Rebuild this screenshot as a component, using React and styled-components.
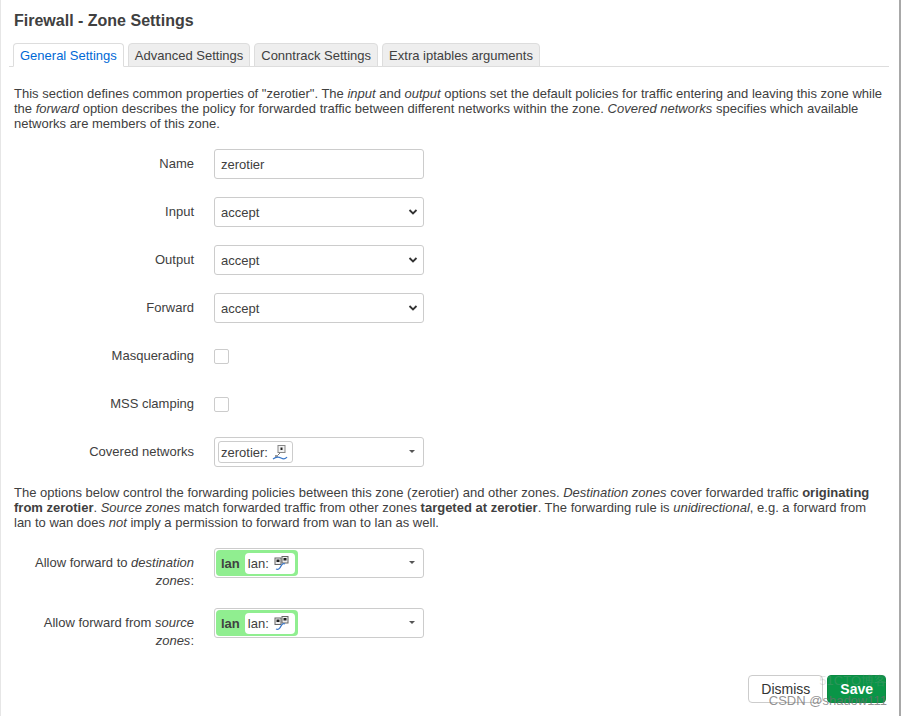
import React from 'react';
import styled, { createGlobalStyle } from 'styled-components';

const GlobalStyle = createGlobalStyle`
  html, body {
    margin: 0;
    padding: 0;
    background: #fff;
  }
  body {
    font-family: "Liberation Sans", Arial, sans-serif;
    font-size: 13px;
    color: #404040;
  }
`;

const Modal = styled.div`
  position: relative;
  box-sizing: border-box;
  width: 901px;
  height: 716px;
  padding: 11px 10px 0 8px;
  border-left: 1px solid #e6e6e6;
  border-right: 2px solid #a8a8a8;
  overflow: hidden;
`;

const Title = styled.h3`
  margin: 0 0 12px 5px;
  font-size: 16px;
  line-height: 20px;
  font-weight: bold;
  color: #404040;
`;

const TabList = styled.ul`
  display: flex;
  gap: 4px;
  margin: 0;
  padding: 0 0 0 4px;
  list-style: none;
  border-bottom: 1px solid #ddd;
`;

const Tab = styled.li`
  box-sizing: border-box;
  height: 24px;
  margin-bottom: -1px;
  padding: 0 6px;
  line-height: 23px;
  font-size: 13px;
  border: 1px solid #ddd;
  border-bottom-color: ${p => (p.active ? '#fff' : '#ddd')};
  border-radius: 4px 4px 0 0;
  background: ${p => (p.active ? '#fff' : '#eee')};
  color: ${p => (p.active ? '#0069d6' : '#404040')};
`;

const Description = styled.p`
  margin: ${p => p.margin || '0'};
  padding: 0 5px;
  font-size: 13px;
  line-height: 15px;
  color: #404040;
`;

const Form = styled.div`
  display: flex;
  flex-direction: column;
  gap: 18px;
  padding-left: 5px;
`;

const Row = styled.div`
  display: flex;
  align-items: flex-start;
  gap: 20px;
`;

const Label = styled.label`
  flex: 0 0 180px;
  padding-top: 6px;
  text-align: right;
  line-height: 18px;
  font-size: 13px;
  color: #404040;
`;

const Field = styled.div`
  position: relative;
  display: flex;
  align-items: center;
  min-height: 30px;
`;

const TextInput = styled.input`
  box-sizing: border-box;
  width: 210px;
  height: 30px;
  padding: 0 6px;
  font: inherit;
  font-size: 13px;
  color: #404040;
  border: 1px solid #ccc;
  border-radius: 3px;
  outline: none;
`;

const Select = styled.select`
  box-sizing: border-box;
  width: 210px;
  height: 30px;
  padding: 0 6px;
  font: inherit;
  font-size: 13px;
  color: #404040;
  background: #fff;
  border: 1px solid #ccc;
  border-radius: 3px;
  appearance: none;
  outline: none;
`;

const Chevron = styled.svg`
  position: absolute;
  right: 6px;
  top: 11px;
  pointer-events: none;
`;

const Checkbox = styled.span`
  box-sizing: border-box;
  display: block;
  width: 15px;
  height: 15px;
  border: 1px solid #ccc;
  border-radius: 2px;
  background: #fff;
`;

const Dropdown = styled.div`
  box-sizing: border-box;
  position: relative;
  display: flex;
  align-items: center;
  width: 210px;
  height: 30px;
  padding: 0 2px 0 ${p => (p.tight ? '1px' : '3px')};
  border: 1px solid #ccc;
  border-radius: 3px;
  background: #fff;
`;

const Caret = styled.span`
  position: absolute;
  right: 8px;
  top: 12px;
  width: 0;
  height: 0;
  border-left: 3px solid transparent;
  border-right: 3px solid transparent;
  border-top: 3px solid #555;
`;

const Chip = styled.span`
  box-sizing: border-box;
  display: inline-flex;
  align-items: center;
  gap: 4px;
  height: 22px;
  padding: 0 4px 0 2px;
  font-size: 13px;
  color: #404040;
  background: #fff;
  border: 1px solid #ccc;
  border-radius: 3px;
`;

const ZoneBadge = styled.span`
  box-sizing: border-box;
  display: inline-flex;
  align-items: center;
  gap: 5px;
  height: 26px;
  padding: 0 3px 0 5px;
  background: #90ee90;
  border-radius: 4px;
  font-weight: bold;
  font-size: 13px;
  color: #404040;
`;

const InnerChip = styled.span`
  box-sizing: border-box;
  display: inline-flex;
  align-items: center;
  gap: 4px;
  height: 21px;
  padding: 0 4px 0 3px;
  background: #fff;
  border-radius: 4px;
  font-weight: normal;
`;

const Footer = styled.div`
  display: flex;
  justify-content: flex-end;
  gap: 4px;
  margin-top: 25px;
  padding-right: 3px;
`;

const Button = styled.button`
  box-sizing: border-box;
  height: 28px;
  padding: 0 12px;
  font-family: inherit;
  font-size: 14px;
  font-weight: ${p => (p.primary ? 'bold' : 'normal')};
  color: ${p => (p.primary ? '#fff' : '#333')};
  background: ${p => (p.primary ? '#0a9547' : '#fff')};
  border: 1px solid ${p => (p.primary ? '#0a8a42' : '#ccc')};
  border-radius: 4px;
`;

const Watermark = styled.div`
  position: absolute;
  right: ${p => p.right}px;
  bottom: ${p => p.bottom}px;
  font-size: 13px;
  color: ${p => p.color};
  white-space: nowrap;
  pointer-events: none;
`;

const ChevronIcon = () => (
  <Chevron width="10" height="8" viewBox="0 0 10 8">
    <path d="M1.5 2 L5 5.5 L8.5 2" fill="none" stroke="#333" strokeWidth="1.8" />
  </Chevron>
);

const TunnelIcon = () => (
  <svg width="16" height="16" viewBox="0 0 16 16">
    <rect x="6" y="1.5" width="7" height="7" fill="#f2f2f2" stroke="#888" />
    <rect x="8.5" y="3.5" width="2" height="2.5" fill="#222" />
    <path d="M8 9 L5 12" stroke="#777" strokeWidth="1" />
    <rect x="3" y="11" width="3" height="2" fill="#999" />
    <path d="M1 15 Q5 12 9 14 T15 13" fill="none" stroke="#3a78c9" strokeWidth="1.3" />
  </svg>
);

const EthernetIcon = () => (
  <svg width="18" height="16" viewBox="0 0 18 16">
    <rect x="2" y="3" width="6" height="6.5" fill="#eee" stroke="#666" />
    <rect x="3.5" y="4.5" width="3" height="2.5" fill="#222" />
    <rect x="9" y="1.5" width="6" height="6.5" fill="#eee" stroke="#666" />
    <rect x="10.5" y="3" width="3" height="2.5" fill="#222" />
    <path d="M3 14 Q6 15.5 8 11 Q10 7.5 12 9" fill="none" stroke="#3a78c9" strokeWidth="1.3" />
  </svg>
);

const ZoneSelect = () => (
  <Dropdown tight>
    <ZoneBadge>
      lan
      <InnerChip>
        lan: <EthernetIcon />
      </InnerChip>
    </ZoneBadge>
    <Caret />
  </Dropdown>
);

export default function App() {
  return (
    <>
      <GlobalStyle />
      <Modal>
        <Title>Firewall - Zone Settings</Title>
        <TabList>
          <Tab active>General Settings</Tab>
          <Tab>Advanced Settings</Tab>
          <Tab>Conntrack Settings</Tab>
          <Tab>Extra iptables arguments</Tab>
        </TabList>

        <Description margin="19px 0 18px">
          This section defines common properties of "zerotier". The <em>input</em> and <em>output</em> options set the default policies for traffic entering and leaving this zone while the <em>forward</em> option describes the policy for forwarded traffic between different networks within the zone. <em>Covered networks</em> specifies which available networks are members of this zone.
        </Description>

        <Form>
          <Row>
            <Label>Name</Label>
            <Field>
              <TextInput defaultValue="zerotier" />
            </Field>
          </Row>
          {['Input', 'Output', 'Forward'].map(name => (
            <Row key={name}>
              <Label>{name}</Label>
              <Field>
                <Select defaultValue="accept">
                  <option value="reject">reject</option>
                  <option value="drop">drop</option>
                  <option value="accept">accept</option>
                </Select>
                <ChevronIcon />
              </Field>
            </Row>
          ))}
          <Row>
            <Label>Masquerading</Label>
            <Field>
              <Checkbox />
            </Field>
          </Row>
          <Row>
            <Label>MSS clamping</Label>
            <Field>
              <Checkbox />
            </Field>
          </Row>
          <Row>
            <Label>Covered networks</Label>
            <Field>
              <Dropdown>
                <Chip>
                  zerotier: <TunnelIcon />
                </Chip>
                <Caret />
              </Dropdown>
            </Field>
          </Row>
        </Form>

        <Description margin="18px 0 18px">
          The options below control the forwarding policies between this zone (zerotier) and other zones. <em>Destination zones</em> cover forwarded traffic <strong>originating from zerotier</strong>. <em>Source zones</em> match forwarded traffic from other zones <strong>targeted at zerotier</strong>. The forwarding rule is <em>unidirectional</em>, e.g. a forward from lan to wan does <em>not</em> imply a permission to forward from wan to lan as well.
        </Description>

        <Form>
          <Row>
            <Label>
              Allow forward to <em>destination zones</em>:
            </Label>
            <Field>
              <ZoneSelect />
            </Field>
          </Row>
          <Row>
            <Label>
              Allow forward from <em>source zones</em>:
            </Label>
            <Field>
              <ZoneSelect />
            </Field>
          </Row>
        </Form>

        <Footer>
          <Button>Dismiss</Button>
          <Button primary>Save</Button>
        </Footer>

        <Watermark right={12} bottom={26} color="rgba(150,150,150,0.25)">51CTO博客</Watermark>
        <Watermark right={12} bottom={8} color="rgba(110,110,110,0.75)">CSDN @shadow111</Watermark>
      </Modal>
    </>
  );
}
